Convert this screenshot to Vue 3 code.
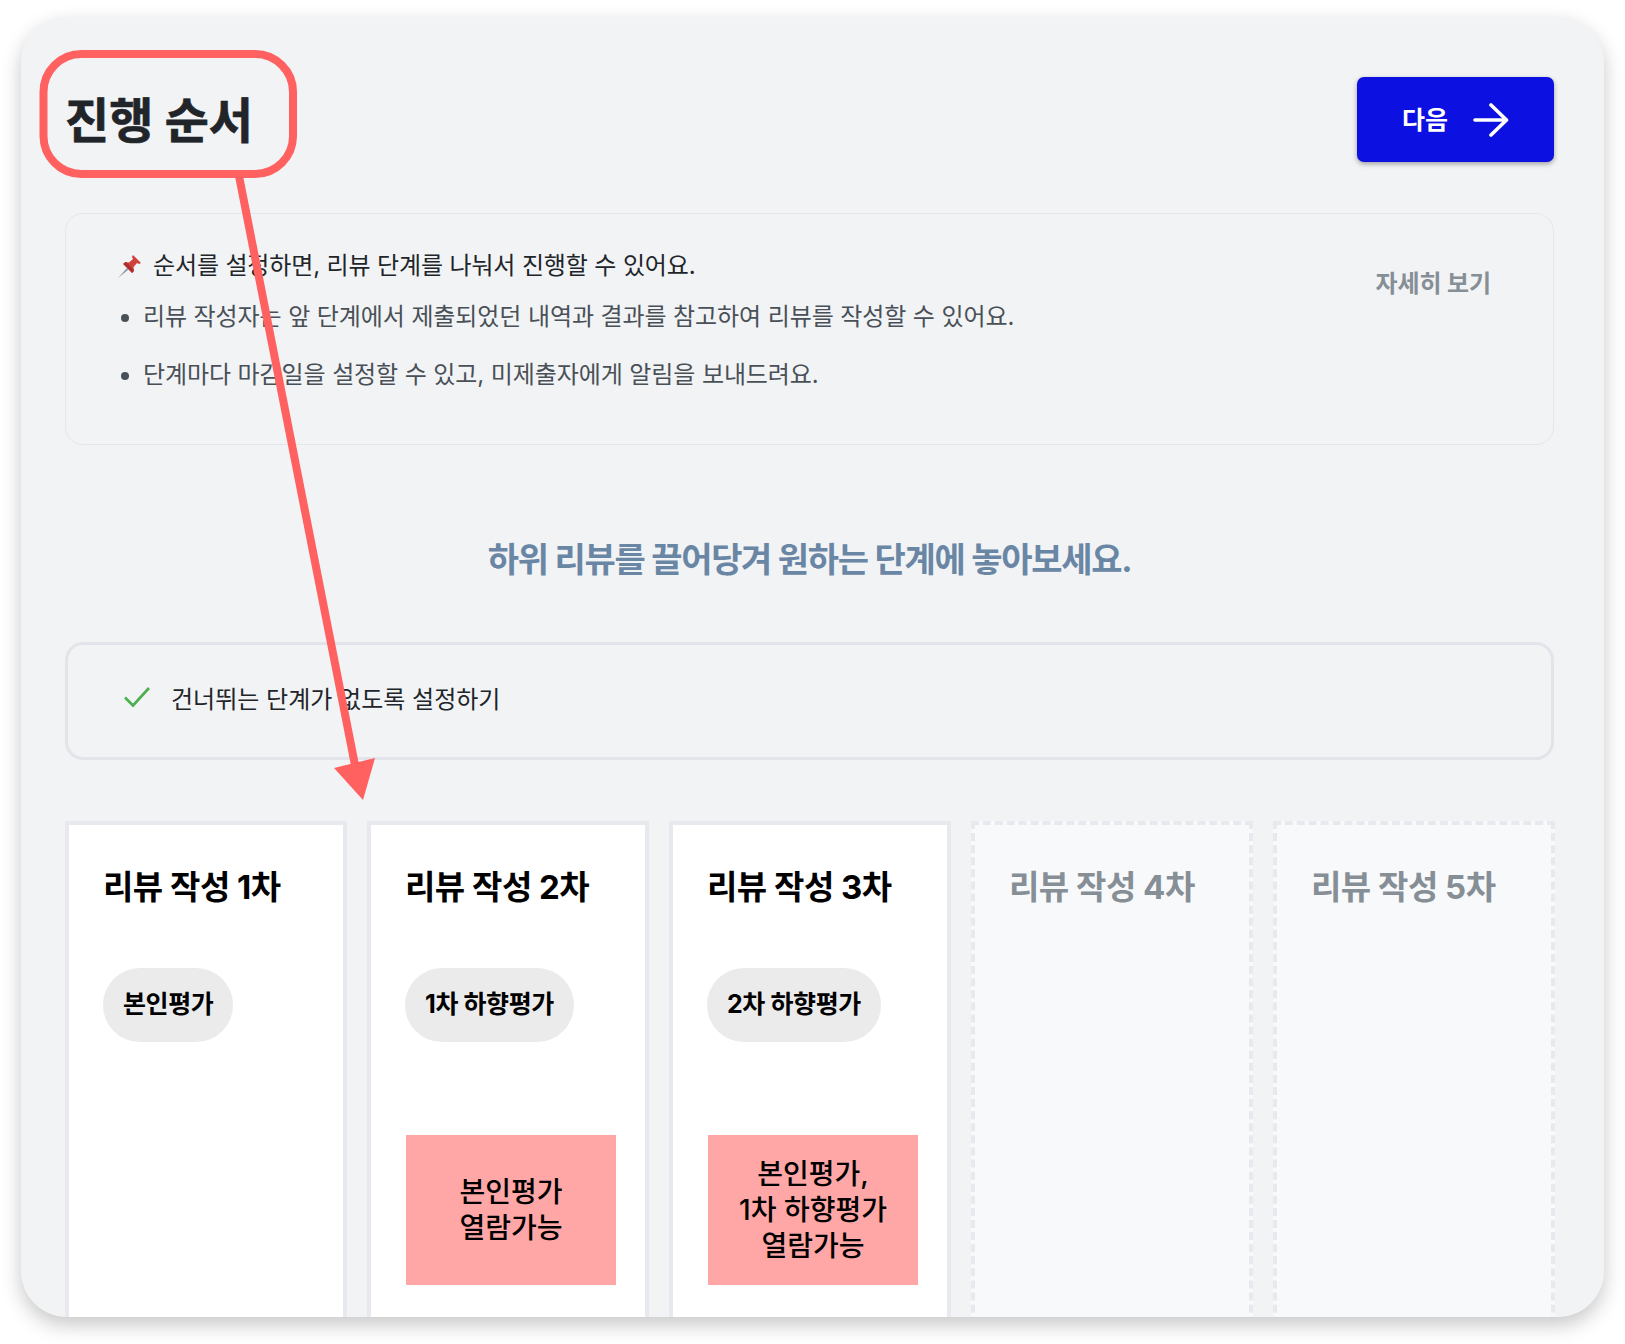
<template>
  <div class="page">
    <div class="card">
      <div class="header">
        <h1 class="title">진행 순서</h1>
        <button class="next-btn">
          <span>다음</span>
          <svg width="36" height="36" viewBox="0 0 36 36" fill="none" stroke="#fff" stroke-width="3.6" stroke-linecap="round" stroke-linejoin="round">
            <path d="M2 18h31" />
            <path d="M18 3l15.500 15L18 33" />
          </svg>
        </button>
      </div>

      <div class="notice">
        <div class="notice-body">
          <p class="notice-head">
            <svg class="pin" width="26" height="26" viewBox="0 0 26 26">
              <path d="M1 25l9-10 1.500 1.500z" fill="#8a97a6" />
              <path d="M16 2l8 8-2 1-2-1-3.500 4 .5 4-2 2-9-9 2-2 4 .5 4-3.500-1-2z" fill="#d2403c" />
              <path d="M9 9l8 8-1.500 3-9-9z" fill="#a82f2d" />
            </svg>
            <span>순서를 설정하면, 리뷰 단계를 나눠서 진행할 수 있어요.</span>
          </p>
          <ul class="notice-list">
            <li>리뷰 작성자는 앞 단계에서 제출되었던 내역과 결과를 참고하여 리뷰를 작성할 수 있어요.</li>
            <li>단계마다 마감일을 설정할 수 있고, 미제출자에게 알림을 보내드려요.</li>
          </ul>
        </div>
        <a class="more">자세히 보기</a>
      </div>

      <h2 class="guide">하위 리뷰를 끌어당겨 원하는 단계에 놓아보세요.</h2>

      <div class="option">
        <svg width="26" height="22" viewBox="0 0 26 22" fill="none" stroke="#4caf50" stroke-width="2.600">
          <path d="M1 11.500l8 8L25 2" />
        </svg>
        <span>건너뛰는 단계가 없도록 설정하기</span>
      </div>

      <div class="columns">
        <div
          v-for="col in columns"
          :key="col.title"
          :class="['column', { empty: !col.pill }]"
        >
          <h3 class="column-title">{{ col.title }}</h3>
          <span v-if="col.pill" class="pill">{{ col.pill }}</span>
          <div v-if="col.note" class="note">
            <span v-for="line in col.note" :key="line">{{ line }}</span>
          </div>
        </div>
      </div>
    </div>

    <!-- annotation drawn over the screenshot -->
    <svg class="overlay" width="1625" height="1344" viewBox="0 0 1625 1344" fill="none">
      <rect x="43.500" y="54" width="249.500" height="120" rx="38" stroke="#ff6060" stroke-width="8" />
      <path d="M239 176L355 765" stroke="#ff6060" stroke-width="8" />
      <path d="M334 768l41-10-12 42z" fill="#ff6060" />
    </svg>
  </div>
</template>

<script setup>
const columns = [
  { title: "리뷰 작성 1차", pill: "본인평가" },
  { title: "리뷰 작성 2차", pill: "1차 하향평가", note: ["본인평가", "열람가능"] },
  { title: "리뷰 작성 3차", pill: "2차 하향평가", note: ["본인평가,", "1차 하향평가", "열람가능"] },
  { title: "리뷰 작성 4차" },
  { title: "리뷰 작성 5차" },
];
</script>

<style>
html,
body {
  background: #fff;
}
</style>

<style scoped>
.page {
  position: relative;
  width: 1625px;
  height: 1344px;
  padding: 17px 21px 27px;
  box-sizing: border-box;
  overflow: hidden;
  font-family: Inter, "Noto Sans CJK KR", sans-serif;
}
.card {
  height: 1300px;
  box-sizing: border-box;
  padding: 60px 50px 0 44px;
  background: #f2f3f5;
  border-radius: 46px;
  box-shadow: 0 8px 20px rgba(0, 0, 0, 0.22);
  overflow: hidden;
}
.header {
  display: flex;
  justify-content: space-between;
  align-items: flex-start;
}
.title {
  margin: 0;
  padding-top: 3px;
  font-size: 48px;
  line-height: 82px;
  height: 85px;
  box-sizing: border-box;
  font-weight: 700;
  color: #212529;
  -webkit-text-stroke: 0.7px #212529;
}
.next-btn {
  display: flex;
  align-items: center;
  justify-content: center;
  gap: 25px;
  width: 197px;
  height: 85px;
  padding-bottom: 0;
  border: none;
  border-radius: 7px;
  background: #0c10e0;
  color: #fff;
  font-family: inherit;
  font-size: 25px;
  font-weight: 700;
  box-shadow: 0 2px 5px rgba(0, 0, 0, 0.35);
}
.next-btn span {
  margin-top: -4px;
}
.notice {
  display: flex;
  justify-content: space-between;
  height: 232px;
  box-sizing: border-box;
  margin-top: 51px;
  padding: 34px 62px 0 51px;
  border: 1px solid #e4e6e9;
  border-radius: 18px;
}
.notice-head {
  display: flex;
  align-items: center;
  gap: 10px;
  margin: 0;
  font-size: 24px;
  line-height: 36px;
  letter-spacing: -0.14px;
  color: #212529;
}
.notice-list {
  margin: 15px 0 0;
  padding: 0 0 0 26px;
  font-size: 24px;
  line-height: 36px;
  letter-spacing: -0.1px;
  color: #495057;
}
.notice-list li + li {
  margin-top: 22px;
}
.more {
  margin-top: 18px;
  font-size: 24px;
  line-height: 36px;
  font-weight: 700;
  letter-spacing: -0.1px;
  color: #868e96;
}
.guide {
  margin: 92px 0 0;
  font-size: 34px;
  line-height: 46px;
  font-weight: 700;
  letter-spacing: -1.3px;
  text-align: center;
  color: #6a86a5;
}
.option {
  display: flex;
  align-items: center;
  gap: 21px;
  height: 118px;
  box-sizing: border-box;
  margin-top: 59px;
  padding: 0 0 8px 56px;
  border: 3px solid #e2e4ea;
  border-radius: 18px;
  font-size: 24px;
  color: #212529;
}
.columns {
  display: grid;
  grid-template-columns: repeat(5, 282px);
  column-gap: 20px;
  margin-top: 61px;
}
.column {
  display: flex;
  flex-direction: column;
  align-items: flex-start;
  height: 540px;
  box-sizing: border-box;
  padding: 37px 0 0 34px;
  background: #fff;
  border: 4px solid #e8e9ee;
}
.column.empty {
  background: #f8f9fb;
  border-style: dashed;
}
.column-title {
  margin: 0;
  font-size: 33px;
  line-height: 50px;
  font-weight: 700;
  letter-spacing: -0.5px;
  color: #000;
}
.column.empty .column-title {
  color: #868e96;
}
.pill {
  margin-top: 56px;
  padding: 0 20px;
  height: 74px;
  line-height: 72px;
  border-radius: 37px;
  background: #ebebeb;
  font-size: 25px;
  font-weight: 700;
  letter-spacing: -0.4px;
  color: #000;
}
.note {
  display: flex;
  flex-direction: column;
  align-items: center;
  justify-content: center;
  width: 210px;
  height: 150px;
  margin: 93px 0 0 1px;
  background: #ffa6a6;
  font-size: 28px;
  line-height: 36px;
  font-weight: 500;
  color: #000;
}
.overlay {
  position: absolute;
  top: 0;
  left: 0;
  pointer-events: none;
}
</style>
